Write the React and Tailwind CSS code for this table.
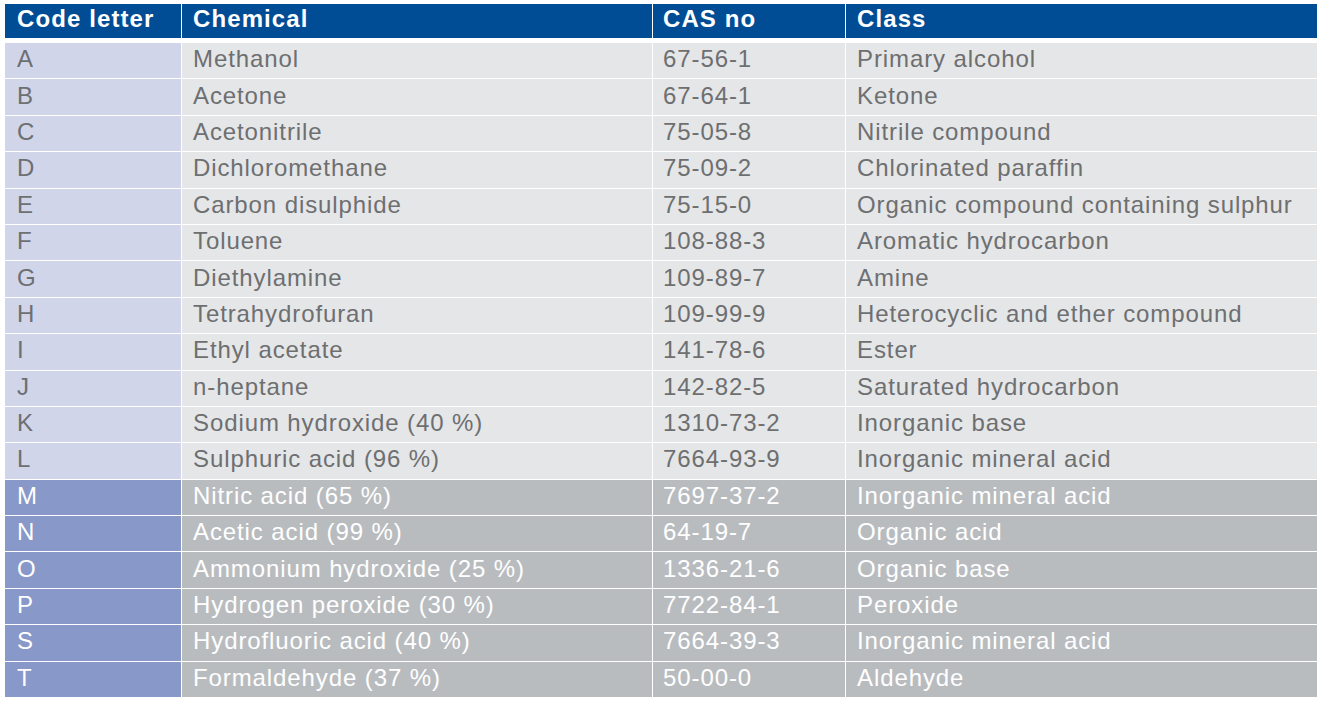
import React from "react";

const rows = [
  ["A", "Methanol", "67-56-1", "Primary alcohol"],
  ["B", "Acetone", "67-64-1", "Ketone"],
  ["C", "Acetonitrile", "75-05-8", "Nitrile compound"],
  ["D", "Dichloromethane", "75-09-2", "Chlorinated paraffin"],
  ["E", "Carbon disulphide", "75-15-0", "Organic compound containing sulphur"],
  ["F", "Toluene", "108-88-3", "Aromatic hydrocarbon"],
  ["G", "Diethylamine", "109-89-7", "Amine"],
  ["H", "Tetrahydrofuran", "109-99-9", "Heterocyclic and ether compound"],
  ["I", "Ethyl acetate", "141-78-6", "Ester"],
  ["J", "n-heptane", "142-82-5", "Saturated hydrocarbon"],
  ["K", "Sodium hydroxide (40 %)", "1310-73-2", "Inorganic base"],
  ["L", "Sulphuric acid (96 %)", "7664-93-9", "Inorganic mineral acid"],
  ["M", "Nitric acid (65 %)", "7697-37-2", "Inorganic mineral acid"],
  ["N", "Acetic acid (99 %)", "64-19-7", "Organic acid"],
  ["O", "Ammonium hydroxide (25 %)", "1336-21-6", "Organic base"],
  ["P", "Hydrogen peroxide (30 %)", "7722-84-1", "Peroxide"],
  ["S", "Hydrofluoric acid (40 %)", "7664-39-3", "Inorganic mineral acid"],
  ["T", "Formaldehyde (37 %)", "50-00-0", "Aldehyde"],
];

const pads = ["pl-[12px]", "pl-[11px]", "pl-[10px]", "pl-[11px]"];

export default function App() {
  return (
    <div
      className="bg-white w-[1323px] h-[705px] pt-[4px] pl-[5px]"
      style={{ fontFamily: '"Liberation Sans", Arial, sans-serif' }}
    >
      <div className="w-[1312px] grid grid-cols-[176px_470px_192px_471px] gap-x-px bg-white">
        {["Code letter", "Chemical", "CAS no", "Class"].map((h, i) => (
          <div
            key={h}
            className={`h-[34px] bg-[#004C95] text-white font-bold text-[24px] tracking-[1.1px] leading-none flex items-center pb-[4px] ${pads[i]}`}
          >
            {h}
          </div>
        ))}
      </div>
      <div className="mt-[5px] w-[1312px] grid grid-cols-[176px_470px_192px_471px] gap-px bg-white">
        {rows.map((r, ri) => {
          const dark = ri >= 12;
          return r.map((c, ci) => (
            <div
              key={ri + "-" + ci}
              className={`h-[35.4px] flex items-center text-[24px] tracking-[0.9px] leading-none whitespace-nowrap pb-[3px] ${pads[ci]} ${
                dark
                  ? ci === 0
                    ? "bg-[#8898C9] text-white"
                    : "bg-[#B9BCBF] text-white"
                  : ci === 0
                  ? "bg-[#D0D5EA] text-[#6D6F71]"
                  : "bg-[#E5E6E7] text-[#6D6F71]"
              }`}
            >
              {c}
            </div>
          ));
        })}
      </div>
    </div>
  );
}
